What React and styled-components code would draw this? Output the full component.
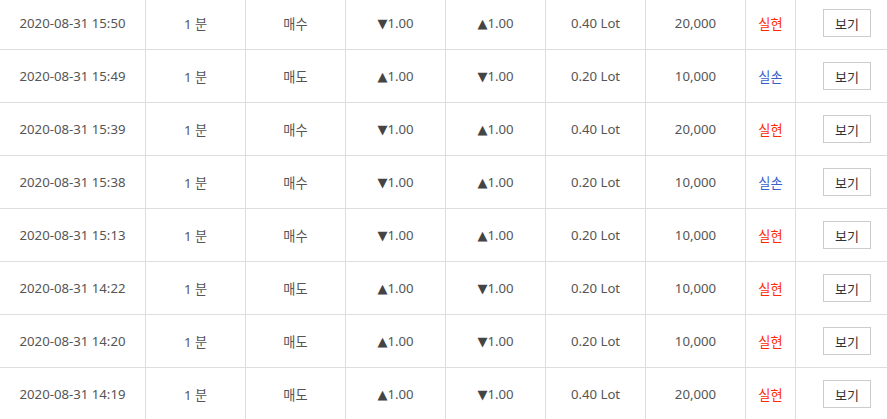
import React from "react";
import styled, { createGlobalStyle } from "styled-components";

const Global = createGlobalStyle`
  html, body { margin: 0; padding: 0; overflow: hidden; background: #fff; }
  body { font-family: "Noto Sans", "Noto Sans CJK KR", sans-serif; }
`;

const Table = styled.div`
  margin-top: -3px;
  width: 896px;
`;

const Row = styled.div`
  display: grid;
  grid-template-columns: 146px repeat(6, 100px) 50px 100px;
  height: 53px;
  border-bottom: 1px solid #dddddd;
  box-sizing: border-box;
`;

const Cell = styled.div`
  display: flex;
  align-items: center;
  justify-content: center;
  border-right: ${(p) => (p.$last ? "none" : "1px solid #dddddd")};
  font-size: 13.2px;
  color: ${(p) => p.$color || "#555555"};
  white-space: nowrap;
`;

const Arrow = styled.span`
  font-size: 13px;
  color: #444;
  margin-right: 0;
  font-family: "DejaVu Sans", sans-serif;
`;

const ViewButton = styled.button`
  width: 48px;
  height: 28px;
  margin-left: 2px;
  border: 1px solid #cccccc;
  background: #fff;
  color: #333;
  font-family: "Noto Sans CJK KR", sans-serif;
  font-size: 13px;
  padding: 0;
  cursor: pointer;
`;

const rows = [
  ["2020-08-31 15:50", "매수", "down", "up", "0.40", "20,000", "실현"],
  ["2020-08-31 15:49", "매도", "up", "down", "0.20", "10,000", "실손"],
  ["2020-08-31 15:39", "매수", "down", "up", "0.40", "20,000", "실현"],
  ["2020-08-31 15:38", "매수", "down", "up", "0.20", "10,000", "실손"],
  ["2020-08-31 15:13", "매수", "down", "up", "0.20", "10,000", "실현"],
  ["2020-08-31 14:22", "매도", "up", "down", "0.20", "10,000", "실현"],
  ["2020-08-31 14:20", "매도", "up", "down", "0.20", "10,000", "실현"],
  ["2020-08-31 14:19", "매도", "up", "down", "0.40", "20,000", "실현"],
];

const Price = ({ dir }) => (
  <>
    <Arrow>{dir === "up" ? "▲" : "▼"}</Arrow>1.00
  </>
);

export default function App() {
  return (
    <>
      <Global />
      <Table>
        {rows.map((r, i) => (
          <Row key={i}>
            <Cell>{r[0]}</Cell>
            <Cell>1 분</Cell>
            <Cell>{r[1]}</Cell>
            <Cell><Price dir={r[2]} /></Cell>
            <Cell><Price dir={r[3]} /></Cell>
            <Cell>{r[4]} Lot</Cell>
            <Cell>{r[5]}</Cell>
            <Cell $color={r[6] === "실현" ? "#ff2a00" : "#3a5fcd"}>{r[6]}</Cell>
            <Cell $last><ViewButton>보기</ViewButton></Cell>
          </Row>
        ))}
      </Table>
    </>
  );
}
